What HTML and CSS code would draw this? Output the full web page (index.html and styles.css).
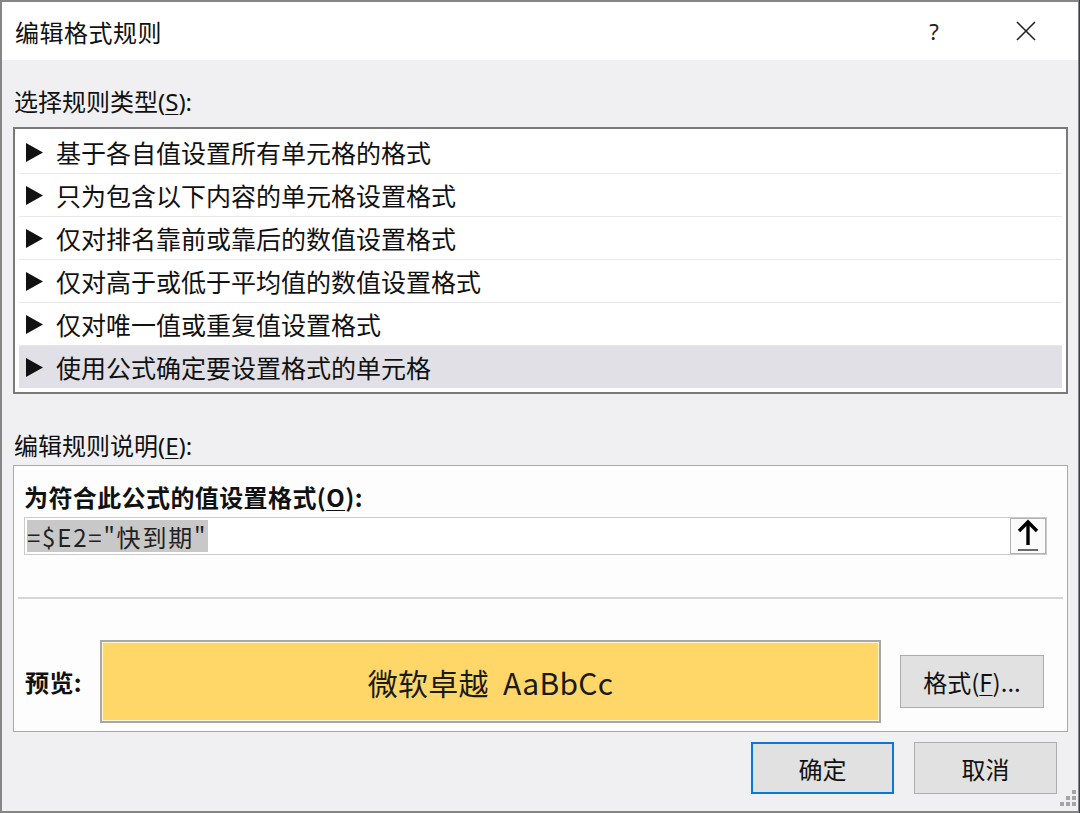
FILE: index.html
```html
<!DOCTYPE html>
<html lang="zh-CN">
<head>
<meta charset="utf-8">
<title>编辑格式规则</title>
<link rel="stylesheet" href="styles.css">
</head>
<body>
<div class="window">
  <div class="titlebar">
    <div class="title">编辑格式规则</div>
    <div class="tb-btns">
      <span class="tb-help">?</span>
      <span class="tb-close">
        <svg width="20" height="20" viewBox="0 0 20 20"><path d="M1 1 L19 19 M19 1 L1 19" stroke="#222" stroke-width="1.6" fill="none"/></svg>
      </span>
    </div>
  </div>
  <div class="body">
    <div class="label">选择规则类型(<u>S</u>):</div>
    <div class="listbox">
      <div class="row"><svg class="tri" viewBox="0 0 17 19"><polygon points="0,0 17,9.5 0,19" fill="#111"/></svg><span>基于各自值设置所有单元格的格式</span></div>
      <div class="row"><svg class="tri" viewBox="0 0 17 19"><polygon points="0,0 17,9.5 0,19" fill="#111"/></svg><span>只为包含以下内容的单元格设置格式</span></div>
      <div class="row"><svg class="tri" viewBox="0 0 17 19"><polygon points="0,0 17,9.5 0,19" fill="#111"/></svg><span>仅对排名靠前或靠后的数值设置格式</span></div>
      <div class="row"><svg class="tri" viewBox="0 0 17 19"><polygon points="0,0 17,9.5 0,19" fill="#111"/></svg><span>仅对高于或低于平均值的数值设置格式</span></div>
      <div class="row"><svg class="tri" viewBox="0 0 17 19"><polygon points="0,0 17,9.5 0,19" fill="#111"/></svg><span>仅对唯一值或重复值设置格式</span></div>
      <div class="row selected"><svg class="tri" viewBox="0 0 17 19"><polygon points="0,0 17,9.5 0,19" fill="#111"/></svg><span>使用公式确定要设置格式的单元格</span></div>
    </div>
    <div class="label label2">编辑规则说明(<u>E</u>):</div>
    <div class="descbox">
      <div class="bold-label">为符合此公式的值设置格式(<u>O</u>):</div>
      <div class="input">
        <span class="sel">=$E2="快到期"</span>
        <span class="refbtn">
          <svg width="24" height="34" viewBox="0 0 24 34"><path d="M12 3 V26" stroke="#000" stroke-width="3.4" fill="none"/><path d="M3 12 L12 3 L21 12" stroke="#000" stroke-width="3.4" fill="none" stroke-linejoin="miter"/><path d="M2 31 H22" stroke="#444" stroke-width="1.6"/></svg>
        </span>
      </div>
      <div class="sep"></div>
      <div class="preview-row">
        <div class="bold-label pv-label">预览:</div>
        <div class="preview">微软卓越&nbsp; AaBbCc</div>
        <button class="btn fmt">格式(<u>F</u>)...</button>
      </div>
    </div>
    <div class="footer">
      <button class="btn ok">确定</button>
      <button class="btn">取消</button>
    </div>
  </div>
  <div class="grip">
    <i class="g1"></i><i class="g2"></i><i class="g3"></i><i class="g4"></i><i class="g5"></i><i class="g6"></i>
  </div>
</div>
</body>
</html>
```
FILE: styles.css
```css
* { box-sizing: border-box; }
html, body { margin: 0; padding: 0; }
body {
  background: #33414d;
  width: 1080px;
  height: 813px;
  overflow: hidden;
  font-family: "Noto Sans", "Noto Sans CJK SC", sans-serif;
  color: #111;
}
.window {
  position: relative;
  width: 1079px;
  height: 813px;
  border: 2px solid #858585;
  border-right-width: 1px;
  background: #f0f0f2;
  display: flex;
  flex-direction: column;
}
.titlebar {
  height: 58px;
  background: #fff;
  display: flex;
  align-items: center;
  justify-content: space-between;
  padding-left: 13px;
  flex: none;
}
.title {
  font-size: 24px;
  line-height: 30px;
  font-family: "Noto Sans CJK SC", sans-serif;
  letter-spacing: 0.5px;
  margin-top: 2px;
}
.tb-btns {
  display: flex;
  align-items: center;
}
.tb-help {
  font-size: 22px;
  font-family: "Noto Sans", sans-serif;
  width: 96px;
  text-align: center;
  color: #222;
}
.tb-close {
  width: 96px;
  display: flex;
  justify-content: center;
  padding-right: 8px;
}
.body {
  flex: 1;
  display: flex;
  flex-direction: column;
  padding: 27px 10px 0 11px;
}
.label {
  font-size: 24px;
  line-height: 30px;
  padding-left: 1px;
}
u { text-decoration-thickness: 1px; text-underline-offset: 3px; }
.listbox {
  margin-top: 10px;
  height: 267px;
  border: 2px solid #7a7a7a;
  background: #fff;
  padding: 2px 4px;
  display: flex;
  flex-direction: column;
}
.row {
  height: 43px;
  display: flex;
  align-items: center;
  border-bottom: 1px solid #e8e8ec;
  font-size: 25px;
  font-family: "Noto Sans CJK SC", sans-serif;
  padding-left: 7px;
  flex: none;
}
.row .tri { width: 17px; height: 19px; margin-right: 13px; flex: none; }
.row.selected { background: #e0e0e6; border-bottom: none; height: 42px; }
.label2 { margin-top: 37px; }
.descbox {
  margin-top: 4px;
  height: 267px;
  border: 1px solid #a9a9a9;
  background: #fdfdfe;
  display: flex;
  flex-direction: column;
  padding: 16px 20px 0 10px;
}
.bold-label {
  font-size: 24px;
  line-height: 30px;
  font-weight: 700;
  font-family: "Noto Sans CJK SC", sans-serif;
  letter-spacing: 0.4px;
}
.input {
  margin-top: 5px;
  height: 38px;
  border: 1px solid #cacaca;
  background: #fff;
  display: flex;
  align-items: center;
  justify-content: space-between;
  padding-left: 2px;
}
.sel {
  background: #c8c8c8;
  height: 32px;
  display: flex;
  align-items: center;
  font-size: 24px;
  font-family: "Noto Sans CJK SC", sans-serif;
  letter-spacing: 1.8px;
  padding-right: 1px;
  color: #222;
}
.refbtn {
  width: 36px;
  height: 36px;
  border: 1px solid #b3b3b3;
  background: #fbfbfb;
  display: flex;
  align-items: center;
  justify-content: center;
}
.sep {
  margin: 42px -16px 0 -6px;
  height: 2px;
  background: #d6d6d8;
}
.preview-row {
  margin-top: 41px;
  display: flex;
  align-items: center;
  padding-left: 1px;
}
.pv-label { width: 75px; }
.preview {
  width: 781px;
  height: 83px;
  border: 2px solid #a8a8a8;
  box-shadow: inset 0 0 0 1px #fff6d8;
  background: #fed768;
  display: flex;
  align-items: center;
  justify-content: center;
  font-size: 30px;
  font-family: "Noto Sans CJK SC", sans-serif;
  letter-spacing: 0.3px;
  color: #1a1a1a;
}
.btn {
  font-family: "Noto Sans CJK SC", sans-serif;
  font-size: 24px;
  color: #111;
  background: #e1e1e1;
  border: 1px solid #adadad;
  padding: 0;
  display: flex;
  align-items: center;
  justify-content: center;
}
.fmt {
  width: 144px;
  height: 53px;
  margin-left: 19px;
}
.footer {
  margin-top: 10px;
  display: flex;
  justify-content: flex-end;
  gap: 20px;
  padding-right: 11px;
}
.footer .btn { width: 143px; height: 52px; }
.footer .ok { border: 2px solid #0a78d4; }
.grip {
  position: absolute;
  right: 2px;
  bottom: 3px;
  width: 18px;
  height: 18px;
}
.grip i {
  position: absolute;
  width: 4px;
  height: 4px;
  background: #a3a3a8;
}
.grip .g1 { right: 0; top: 0; }
.grip .g2 { right: 0; top: 6px; }
.grip .g3 { right: 6px; top: 6px; }
.grip .g4 { right: 0; top: 12px; }
.grip .g5 { right: 6px; top: 12px; }
.grip .g6 { right: 12px; top: 12px; }
```
